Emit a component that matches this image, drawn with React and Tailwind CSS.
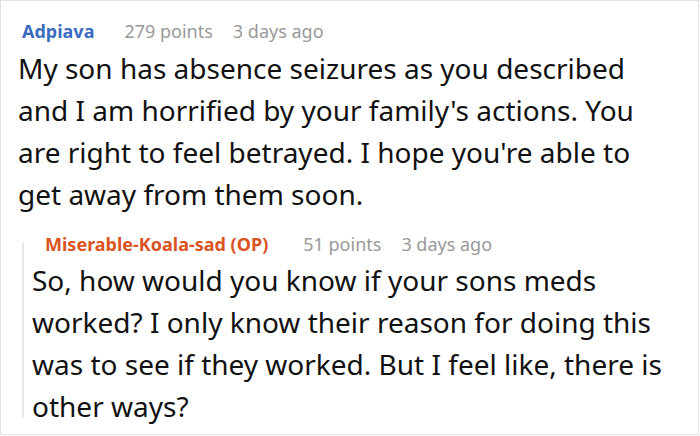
export default function App() {
  return (
    <div className="w-[700px] h-[436px] bg-white overflow-hidden" style={{ fontFamily: '"Noto Sans", sans-serif' }}>
      <div className="w-[699px] h-[435px] border border-[#e3e3e3] box-border">
        <div className="pt-[18px] pl-[21px] flex items-baseline text-[18px] leading-[24px]">
          <span className="font-bold text-[#3a6cbf]">Adpiava</span>
          <span className="ml-[30px] text-[#999999]">279 points</span>
          <span className="ml-[20px] text-[#999999]">3 days ago</span>
        </div>
        <p className="pl-[17px] pr-[20px] mt-[4px] text-[28px] leading-[42px] text-[#111111]">
          My son has absence seizures as you described and I am horrified by your family's actions. You are right to feel betrayed. I hope you're able to get away from them soon.
        </p>
        <div className="ml-[21px] mt-[28px] flex flex-col border-l-2 border-[#e6e6e6] pl-[8px]">
          <div className="-mt-[11px] pl-[13px] flex items-baseline text-[18px] leading-[24px]">
            <span className="font-bold text-[#d9541f]">Miserable-Koala-sad (OP)</span>
            <span className="ml-[35px] text-[#999999]">51 points</span>
            <span className="ml-[20px] text-[#999999]">3 days ago</span>
          </div>
          <p className="mt-[3px] -mb-[10px] pr-[20px] text-[28px] leading-[42px] text-[#111111]">
            So, how would you know if your sons meds worked? I only know their reason for doing this was to see if they worked. But I feel like, there is other ways?
          </p>
        </div>
      </div>
    </div>
  );
}
